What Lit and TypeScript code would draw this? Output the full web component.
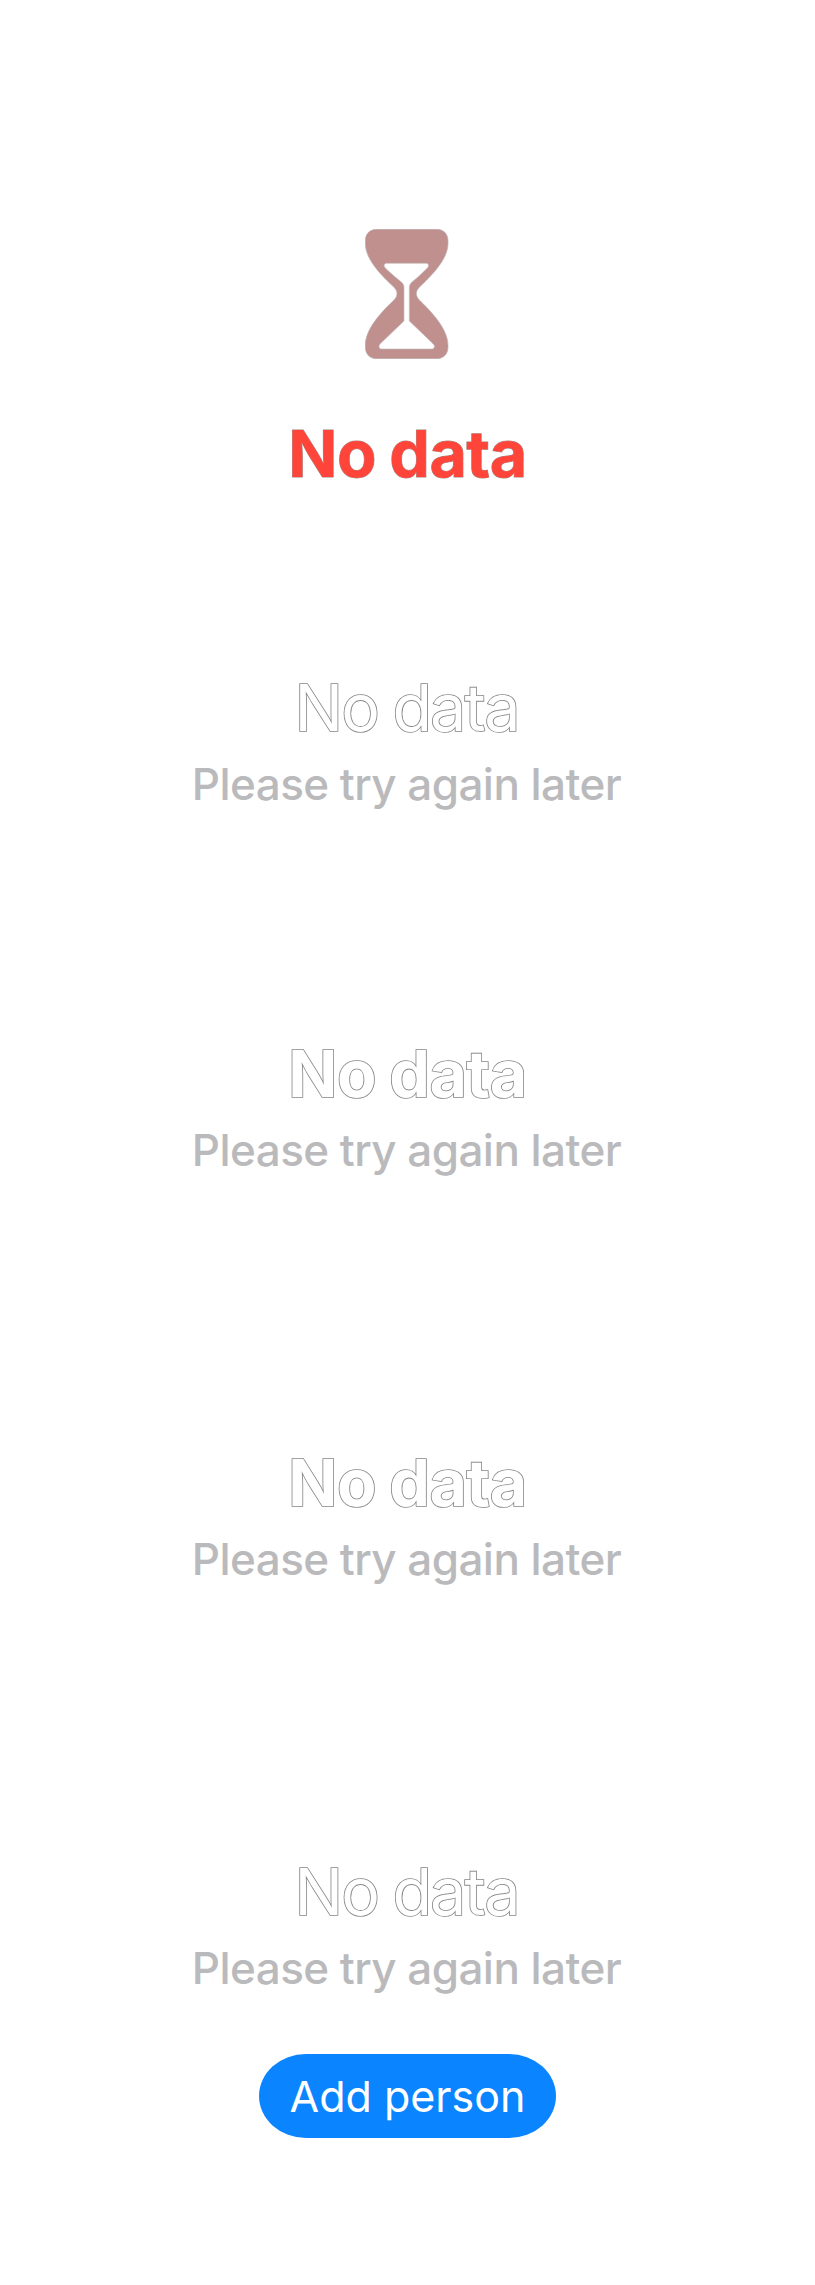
import { LitElement, html, css, nothing } from "lit";
import { classMap } from "lit/directives/class-map.js";

class EmptyState extends LitElement {
  static properties = {
    heading: {},
    subtitle: {},
    action: {},
    tone: {},
    icon: { type: Boolean },
  };
  declare heading: string;
  declare subtitle?: string;
  declare action?: string;
  declare tone: string;
  declare icon: boolean;

  static styles = css`
    :host {
      display: flex;
      flex-direction: column;
      align-items: center;
      font-family: Inter, "Liberation Sans", sans-serif;
    }
    .icon {
      display: block;
      width: 83.33px;
      height: 130px;
      margin-bottom: 55px;
      margin-right: 1px;
    }
    .shape {
      fill: #bf908d;
      stroke: #b9aeae;
      stroke-width: 2;
    }
    .hole {
      fill: #fff;
      stroke: #c4bcbc;
      stroke-width: 2;
    }
    .heading {
      margin: 0;
      font-size: 64.5px;
      line-height: 80px;
      font-weight: 700;
      letter-spacing: -0.5px;
      word-spacing: -1.5px;
      color: #fff;
      -webkit-text-stroke: 1.7px #868686;
      paint-order: stroke fill;
      white-space: nowrap;
    }
    .regular {
      margin-right: 2px;
      font-weight: 400;
      letter-spacing: -1.8px;
      word-spacing: -2px;
    }
    .danger {
      color: #ff453a;
      -webkit-text-stroke: 0.9px #a08a88;
    }
    .subtitle {
      margin: 9px 0 0;
      font-size: 44px;
      line-height: 54px;
      font-weight: 500;
      letter-spacing: -0.55px;
      text-indent: -2px;
      color: #bababc;
      white-space: nowrap;
    }
    .action {
      box-sizing: border-box;
      width: 297px;
      height: 84px;
      margin-top: 59px;
      padding: 1px 0 0;
      border: 0;
      border-radius: 47px / 42px;
      background: #0a84ff;
      color: #fff;
      font: 400 43px/83px Inter, "Liberation Sans", sans-serif;
      white-space: nowrap;
    }
  `;

  render() {
    return html`
      ${this.icon
        ? html`<svg class="icon" viewBox="77 56 250 390" aria-hidden="true">
            <path class="shape" d="M112 57H292C314 57 326 72 326 92V99C326 145 282 190 246 225C237 234 231 240 231 250C231 260 237 266 246 275C282 310 326 359 326 405V410C326 431 313 445 292 445H112C91 445 78 431 78 410V405C78 359 121 310 158 275C167 266 173 260 173 250C173 240 167 234 158 225C121 190 78 145 78 99V92C78 72 90 57 112 57Z" />
            <path class="hole" d="M142 159H260C268 159 270 167 264 173C250 188 230 205 217 216C212 221 210 225 210 233V332L281 400C289 408 285 416 276 416H128C119 416 116 408 123 400L194 332V233C194 225 192 221 187 216C174 205 153 188 138 173C132 167 134 159 142 159Z" />
          </svg>`
        : nothing}
      <h2 class=${classMap({ heading: true, regular: this.tone === "regular", danger: this.tone === "danger" })}>${this.heading}</h2>
      ${this.subtitle ? html`<p class="subtitle">${this.subtitle}</p>` : nothing}
      ${this.action ? html`<button class="action">${this.action}</button>` : nothing}
    `;
  }
}
customElements.define("empty-state", EmptyState);

class AppRoot extends LitElement {
  static styles = css`
    :host {
      display: block;
      box-sizing: border-box;
      width: 815px;
      height: 2285px;
      padding-top: 228.5px;
      background: #fff;
    }
    .second {
      margin-top: 174px;
    }
    .third {
      margin-top: 223px;
    }
    .fourth,
    .fifth {
      margin-top: 266.25px;
    }
  `;

  render() {
    const sub = "Please try again later";
    return html`
      <empty-state icon tone="danger" heading="No data"></empty-state>
      <empty-state class="second" tone="regular" heading="No data" subtitle=${sub}></empty-state>
      <empty-state class="third" tone="bold" heading="No data" subtitle=${sub}></empty-state>
      <empty-state class="fourth" tone="bold" heading="No data" subtitle=${sub}></empty-state>
      <empty-state class="fifth" tone="regular" heading="No data" subtitle=${sub} action="Add person"></empty-state>
    `;
  }
}
customElements.define("app-root", AppRoot);
